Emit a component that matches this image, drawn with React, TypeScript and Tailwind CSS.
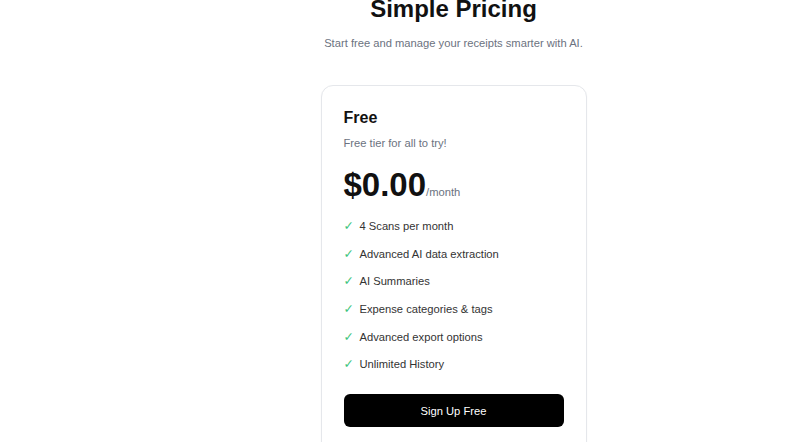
const features = [
  "4 Scans per month",
  "Advanced AI data extraction",
  "AI Summaries",
  "Expense categories & tags",
  "Advanced export options",
  "Unlimited History",
];

function PricingCard() {
  return (
    <div className="w-[266px] rounded-[12px] border border-[#e5e7eb] bg-white px-[22px] pt-[20px] pb-[40px] shadow-[0_1px_2px_rgba(0,0,0,0.04)]">
      <h3 className="text-[16px] leading-[24px] font-bold text-[#111111]">Free</h3>
      <p className="mt-[5px] text-[11.2px] leading-[16px] text-[#6b7280]">Free tier for all to try!</p>
      <div className="mt-[14px] flex items-baseline">
        <span className="text-[33px] leading-[40px] font-bold text-[#111111]">$0.00</span>
        <span className="text-[11.2px] text-[#6b7280]">/month</span>
      </div>
      <ul className="mt-[13px] flex flex-col gap-[11.7px]">
        {features.map((f) => (
          <li key={f} className="flex items-center text-[11.2px] leading-[16px] text-[#333333]">
            <span className="w-[16px] text-[#3cc47c] font-['DejaVu_Sans',sans-serif] text-[12.5px] leading-[16px]">✓</span>
            <span>{f}</span>
          </li>
        ))}
      </ul>
      <button className="mt-[22px] h-[33px] w-full rounded-[6px] bg-black text-[11.2px] font-medium text-white">
        Sign Up Free
      </button>
    </div>
  );
}

export default function App() {
  return (
    <div className="h-[442px] overflow-hidden bg-white font-['Liberation_Sans',Arial,sans-serif]">
      <div className="flex flex-col items-center pl-[101px]">
        <h1 className="-mt-[3px] text-[24px] leading-[24px] font-bold text-[#111111]">Simple Pricing</h1>
        <p className="mt-[14px] text-[11.2px] leading-[16px] text-[#6b7280]">
          Start free and manage your receipts smarter with AI.
        </p>
        <div className="mt-[34px]">
          <PricingCard />
        </div>
      </div>
    </div>
  );
}
